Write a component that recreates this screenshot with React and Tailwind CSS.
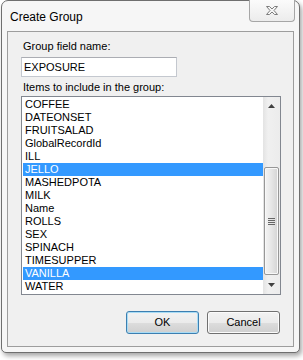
import React from "react";

const items = [
  "COFFEE",
  "DATEONSET",
  "FRUITSALAD",
  "GlobalRecordId",
  "ILL",
  "JELLO",
  "MASHEDPOTA",
  "MILK",
  "Name",
  "ROLLS",
  "SEX",
  "SPINACH",
  "TIMESUPPER",
  "VANILLA",
  "WATER",
];
const selected = new Set(["JELLO", "VANILLA"]);

function CloseGlyph() {
  return (
    <svg width="14" height="11" viewBox="0 0 14 11">
      <path
        d="M1.5 1.5 H4.5 L7 4 L9.5 1.5 H12.5 L9 5.5 L12.5 9.5 H9.5 L7 7 L4.5 9.5 H1.5 L5 5.5 Z"
        fill="#f6f6f6"
        stroke="#7d7d7d"
        strokeWidth="1"
        strokeLinejoin="round"
      />
    </svg>
  );
}

function Btn({ label, def }) {
  return (
    <div
      className={
        "w-[73px] h-[23px] rounded-[3px] border flex items-center justify-center text-[11px] text-black bg-[linear-gradient(#f2f2f2_0%,#ebebeb_50%,#dddddd_51%,#cfcfcf_100%)] " +
        (def
          ? "border-[#3c7fb1] shadow-[inset_0_0_0_1px_#a9dcf5]"
          : "border-[#707070] shadow-[inset_0_0_0_1px_#fbfbfb]")
      }
    >
      {label}
    </div>
  );
}

export default function App() {
  return (
    <div className="w-[303px] h-[360px] bg-white font-['Liberation_Sans',Arial,sans-serif] pt-0 pl-[1px]">
      <div className="w-[299px] h-[353px] rounded-t-[7px] rounded-b-[5px] border border-[#6f6f6f] bg-[#f6f6f6] shadow-[2px_3px_5px_rgba(0,0,0,0.35)] flex flex-col px-[5px] pb-[5px]">
        {/* title bar */}
        <div className="h-[30px] flex justify-between shrink-0">
          <div className="pt-[9px] pl-[3px] text-[12px] leading-[14px] text-black">Create Group</div>
          <div className="w-[46px] h-[22px] -mt-[1px] -mr-[1px] rounded-b-[4px] border border-[#a6a6a6] border-t-0 bg-[linear-gradient(#fbfbfb,#ececec)] flex items-center justify-center">
            <CloseGlyph />
          </div>
        </div>
        {/* client */}
        <div className="flex-1 border border-[#9d9d9d] bg-[#f0f0f0] flex flex-col pl-[13px] pr-[12px]">
          <div className="mt-[8px] pl-[2px] text-[11px] leading-[13px] text-black">Group field name:</div>
          <div className="mt-[4px] w-[156px] h-[20px] border border-[#c4c8cf] border-t-[#abadb3] bg-white flex items-center pl-[2px] text-[11px] text-black">
            EXPOSURE
          </div>
          <div className="mt-[4px] pl-[2px] text-[11px] leading-[13px] text-black">Items to include in the group:</div>
          <div className="mt-[2px] w-[260px] h-[199px] border border-[#828790] bg-white flex">
            <div className="flex-1 pt-[1px] pl-[1px]">
              {items.map((it) => (
                <div
                  key={it}
                  className={
                    "h-[13px] leading-[13px] text-[11px] pl-[2px] " +
                    (selected.has(it) ? "bg-[#3399ff] text-white" : "text-black")
                  }
                >
                  {it}
                </div>
              ))}
            </div>
            <div className="w-[17px] flex flex-col bg-[linear-gradient(90deg,#e3e3e3,#f0f0f0_30%,#ececec)]">
              <div className="h-[17px] flex items-center justify-center">
                <svg width="7" height="4" viewBox="0 0 7 4">
                  <path d="M0 4 L3.5 0 L7 4 Z" fill="#404040" />
                </svg>
              </div>
              <div className="h-[53px]" />
              <div className="mx-[1px] h-[108px] rounded-[2px] border border-[#979797] bg-[linear-gradient(90deg,#f4f4f4,#e6e6e6_50%,#d4d4d4)] shadow-[inset_0_0_0_1px_#f8f8f8] flex flex-col items-center justify-center gap-[1px]">
                <div className="w-[7px] h-[1px] bg-[#666]" />
                <div className="w-[7px] h-[1px] bg-[#666]" />
                <div className="w-[7px] h-[1px] bg-[#666]" />
                <div className="w-[7px] h-[1px] bg-[#666]" />
              </div>
              <div className="flex-1 flex items-center justify-center">
                <svg width="7" height="4" viewBox="0 0 7 4">
                  <path d="M0 0 L7 0 L3.5 4 Z" fill="#404040" />
                </svg>
              </div>
            </div>
          </div>
          <div className="mt-[16px] w-[260px] flex justify-end gap-[8px] pr-[1px]">
            <Btn label="OK" def />
            <Btn label="Cancel" />
          </div>
        </div>
      </div>
    </div>
  );
}
